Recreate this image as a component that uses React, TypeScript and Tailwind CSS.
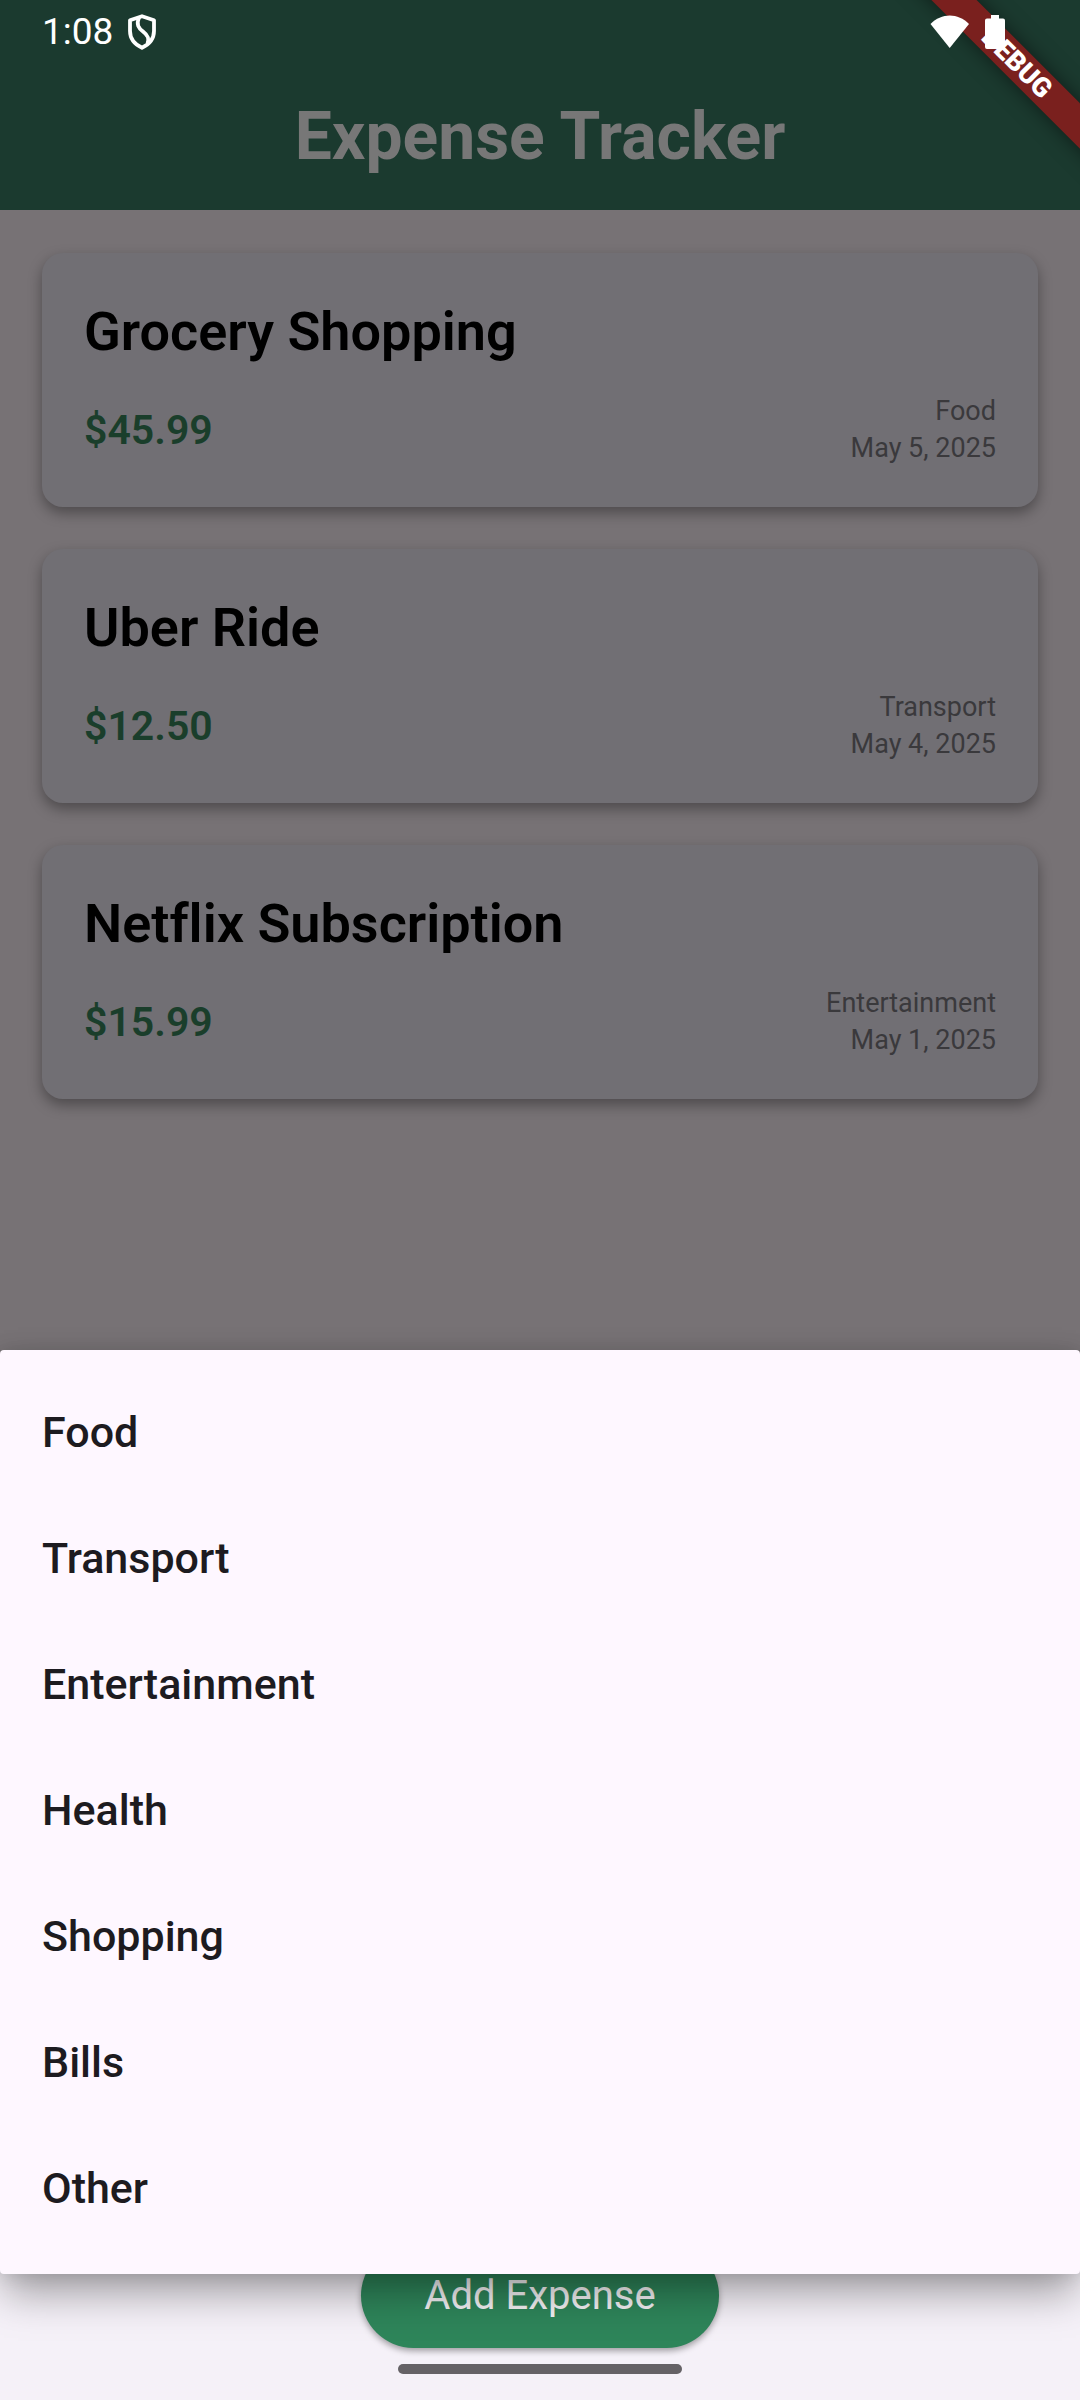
import React from "react";

const expenses = [
  { title: "Grocery Shopping", amount: "$45.99", category: "Food", date: "May 5, 2025" },
  { title: "Uber Ride", amount: "$12.50", category: "Transport", date: "May 4, 2025" },
  { title: "Netflix Subscription", amount: "$15.99", category: "Entertainment", date: "May 1, 2025" },
];

const categories = ["Food", "Transport", "Entertainment", "Health", "Shopping", "Bills", "Other"];

function ShieldIcon() {
  return (
    <svg width="30" height="36" viewBox="0 0 30 36" fill="none" stroke="#fff" strokeWidth="3.8" strokeLinejoin="round" aria-hidden="true">
      <path d="M15 2.2 27 6.3V17c0 7.500-4.600 13.300-12 16.800C7.600 30.300 3 24.500 3 17V6.300Z" />
      <path d="M12 3.500C9 10.500 11.500 14 16 17.500c5 3.800 6.500 7 4.500 12" />
    </svg>
  );
}

function WifiIcon() {
  return (
    <svg width="40" height="34" viewBox="0 0 40 34" fill="#fff" aria-hidden="true">
      <path d="M.5 9C11.500-2.500 28-2.500 39 9L19.700 33Z" />
    </svg>
  );
}

function BatteryIcon() {
  return (
    <svg width="20" height="34" viewBox="0 0 20 34" fill="#fff" aria-hidden="true">
      <path d="M6 0H14V3.500H18a2 2 0 0 1 2 2V32a2 2 0 0 1-2 2H2a2 2 0 0 1-2-2V5.500a2 2 0 0 1 2-2H6Z" />
    </svg>
  );
}

function DebugBanner() {
  return (
    <div className="absolute top-0 right-0 size-[210px] overflow-hidden">
      <div className="absolute top-[47px] -right-[87px] flex h-8 w-[300px] rotate-45 items-center justify-center bg-[#7a201e] text-[27px] leading-8 font-black text-white shadow-[0_0_20px_rgba(0,0,0,0.5)]">
        DEBUG
      </div>
    </div>
  );
}

export default function App() {
  return (
    <div className="relative flex min-h-screen flex-col bg-[#777275] font-['Roboto',sans-serif]">
      <header className="relative bg-[#1b3a2f]">
        <DebugBanner />
        <div className="relative flex h-[63px] items-center justify-between pr-[75px] pl-[42px]">
          <div className="flex items-center gap-[14px]">
            <span className="text-[37px] leading-[42px] text-white">1:08</span>
            <ShieldIcon />
          </div>
          <div className="flex items-center gap-[15px]">
            <WifiIcon />
            <BatteryIcon />
          </div>
        </div>
        <h1 className="flex h-[147px] items-center justify-center text-[66px] leading-[76px] font-bold text-[#777777]">
          Expense Tracker
        </h1>
      </header>

      <main className="flex flex-1 flex-col gap-[42px] px-[42px] pt-[43px] pb-[42px]">
        {expenses.map((e) => (
          <article
            key={e.title}
            className="rounded-[21px] bg-[#716f74] px-[42px] pt-[42px] pb-10 shadow-[0_6px_14px_rgba(0,0,0,0.35)]"
          >
            <h2 className="text-[54px] leading-[74px] font-semibold text-black [font-variant-ligatures:none]">
              {e.title}
            </h2>
            <div className="mt-6 flex items-center justify-between">
              <p className="text-[41px] leading-[56px] font-semibold text-[#1a3e2b]">{e.amount}</p>
              <div className="text-right text-[27px] leading-[37px] text-[#3a393c]">
                <p>{e.category}</p>
                <p>{e.date}</p>
              </div>
            </div>
          </article>
        ))}
      </main>

      <footer className="flex flex-col items-center bg-[#f5f1f8] pb-[26px]">
        <button
          type="button"
          className="h-[105px] rounded-full bg-[#2e855a] px-[63px] text-[40px] leading-[56px] text-[#f3f1f4] shadow-[0_3px_6px_rgba(0,0,0,0.35)]"
        >
          Add Expense
        </button>
        <div className="mt-4 h-[10px] w-[284px] rounded-full bg-[#656266]" />
      </footer>

      <ul className="absolute inset-x-0 bottom-[126px] rounded-[4px] bg-[#fef7ff] py-[21px] shadow-[0_22px_40px_-4px_rgba(0,0,0,0.36),0_0_20px_rgba(0,0,0,0.12)]">
        {categories.map((c) => (
          <li key={c}>
            <button
              type="button"
              className="flex h-[126px] w-full items-center px-[42px] pb-[3px] text-left text-[43px] leading-[63px] font-medium text-[#1d1b20]"
            >
              {c}
            </button>
          </li>
        ))}
      </ul>
    </div>
  );
}
